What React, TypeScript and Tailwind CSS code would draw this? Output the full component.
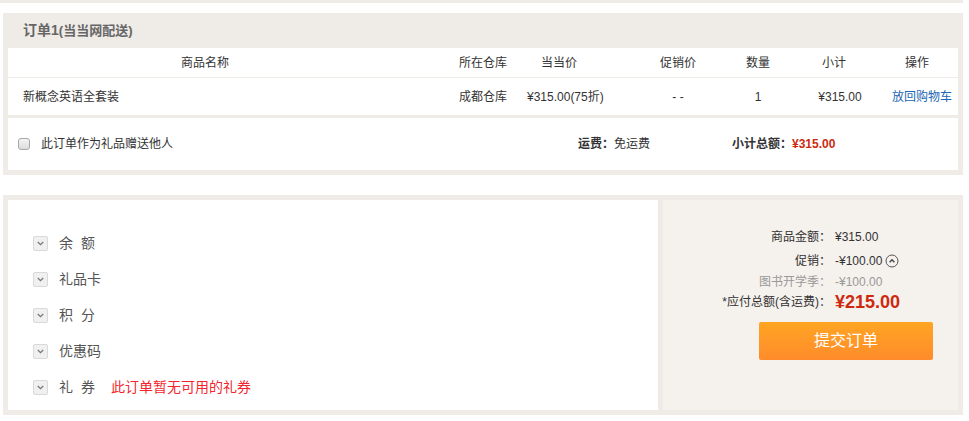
import React from "react";

const FONT = { fontFamily: '"Liberation Sans", "Noto Sans CJK SC", sans-serif' };

function ArrowBox() {
  return (
    <span className="flex h-[15px] w-[15px] items-center justify-center rounded-[2px] border border-[#d9d9d9] bg-[#f0f0f0]">
      <svg width="7" height="5" viewBox="0 0 7 5">
        <path d="M0.8 1 L3.5 3.6 L6.2 1" fill="none" stroke="#777" strokeWidth="1.3" />
      </svg>
    </span>
  );
}

function CircleUp() {
  return (
    <svg width="14" height="14" viewBox="0 0 14 14" className="ml-[3px]">
      <circle cx="7" cy="7" r="6" fill="none" stroke="#555" strokeWidth="1" />
      <path d="M4.6 8.2 L7 5.8 L9.4 8.2" fill="none" stroke="#444" strokeWidth="1.4" />
    </svg>
  );
}

export default function App() {
  const items = [
    { a: "余", b: "额" },
    { a: "礼品卡" },
    { a: "积", b: "分" },
    { a: "优惠码" },
    { a: "礼", b: "券", note: "此订单暂无可用的礼券" },
  ];
  return (
    <div className="w-[969px] h-[421px] bg-white text-[#333] overflow-hidden" style={FONT}>
      <div className="h-[3px] w-[963px] bg-[#efebe7]" />

      {/* Order box */}
      <div className="mt-[10px] ml-[3px] w-[960px] bg-[#efebe7] px-[5px] pb-[5px]">
        <div className="flex h-[35px] items-center pl-[15px] text-[#666]">
          <span className="text-[14px] font-bold">订单1</span>
          <span className="text-[13px] font-bold">(当当网配送)</span>
        </div>
        <div className="bg-white">
          <div className="flex h-[30px] items-center border-b border-[#efebe7] text-[12px]">
            <div className="w-[394px] text-center">商品名称</div>
            <div className="w-[51px]" />
            <div className="w-[67px] pl-[6px]">所在仓库</div>
            <div className="w-[118px] pl-[21px]">当当价</div>
            <div className="w-[80px] text-center">促销价</div>
            <div className="w-[80px] text-center">数量</div>
            <div className="w-[78px] pr-[6px] text-center">小计</div>
            <div className="w-[82px] text-center">操作</div>
          </div>
          <div className="flex h-[37px] items-center text-[12px]">
            <div className="w-[445px] pl-[15px]">新概念英语全套装</div>
            <div className="w-[67px] pl-[6px]">成都仓库</div>
            <div className="w-[118px] pl-[7px]">¥315.00(75折)</div>
            <div className="w-[80px] text-center">- -</div>
            <div className="w-[80px] text-center">1</div>
            <div className="w-[78px] pl-[6px] text-center">¥315.00</div>
            <div className="w-[82px] pl-[10px] text-center text-[#1a66b3]">放回购物车</div>
          </div>
        </div>
        <div className="mt-[3px] flex h-[52px] items-center bg-white text-[12px]">
          <span className="ml-[10px] h-[12px] w-[12px] rounded-[3px] border border-[#a8a8a8] bg-gradient-to-b from-[#f4f4f4] to-[#dcdcdc]" />
          <span className="ml-[11px] w-[537px]">此订单作为礼品赠送他人</span>
          <span className="w-[154px]">
            <b>运费：</b>免运费
          </span>
          <span>
            <b>小计总额：</b>
            <b className="text-[#cc2a0f]">¥315.00</b>
          </span>
        </div>
      </div>

      {/* Payment box */}
      <div className="mt-[20px] ml-[3px] flex h-[220px] w-[960px] gap-[5px] bg-[#efebe7] p-[5px]">
        <div className="w-[650px] bg-white pl-[25px] pt-[25px]">
          {items.map((it, i) => (
            <div key={i} className="flex h-[36px] items-center text-[14px] text-[#555]">
              <ArrowBox />
              <span className="ml-[11px]">{it.a}</span>
              {it.b && <span className="ml-[8px]">{it.b}</span>}
              {it.note && <span className="ml-[16px] text-[#f2262f]">{it.note}</span>}
            </div>
          ))}
        </div>
        <div className="flex-1 bg-[#f5f1ed] pt-[27px] text-[12px]">
          <div className="flex h-[20px] items-center">
            <span className="w-[168px] text-right">商品金额：</span>
            <span className="ml-[4px]">¥315.00</span>
          </div>
          <div className="mt-[4px] flex h-[20px] items-center">
            <span className="w-[168px] text-right">促销：</span>
            <span className="ml-[4px]">-¥100.00</span>
            <CircleUp />
          </div>
          <div className="mt-[1px] flex h-[20px] items-center text-[#999]">
            <span className="w-[168px] text-right">图书开学季：</span>
            <span className="ml-[4px]">-¥100.00</span>
          </div>
          <div className="flex h-[20px] items-center">
            <span className="w-[168px] text-right">*应付总额(含运费)：</span>
            <span className="ml-[4px] text-[18px] font-bold text-[#cc2a0f]">¥215.00</span>
          </div>
          <div className="mt-[10px] ml-[96px] flex h-[38px] w-[174px] items-center justify-center rounded-[2px] bg-gradient-to-b from-[#ffa522] to-[#ff8b2b] text-[16px] text-white">
            提交订单
          </div>
        </div>
      </div>
    </div>
  );
}
